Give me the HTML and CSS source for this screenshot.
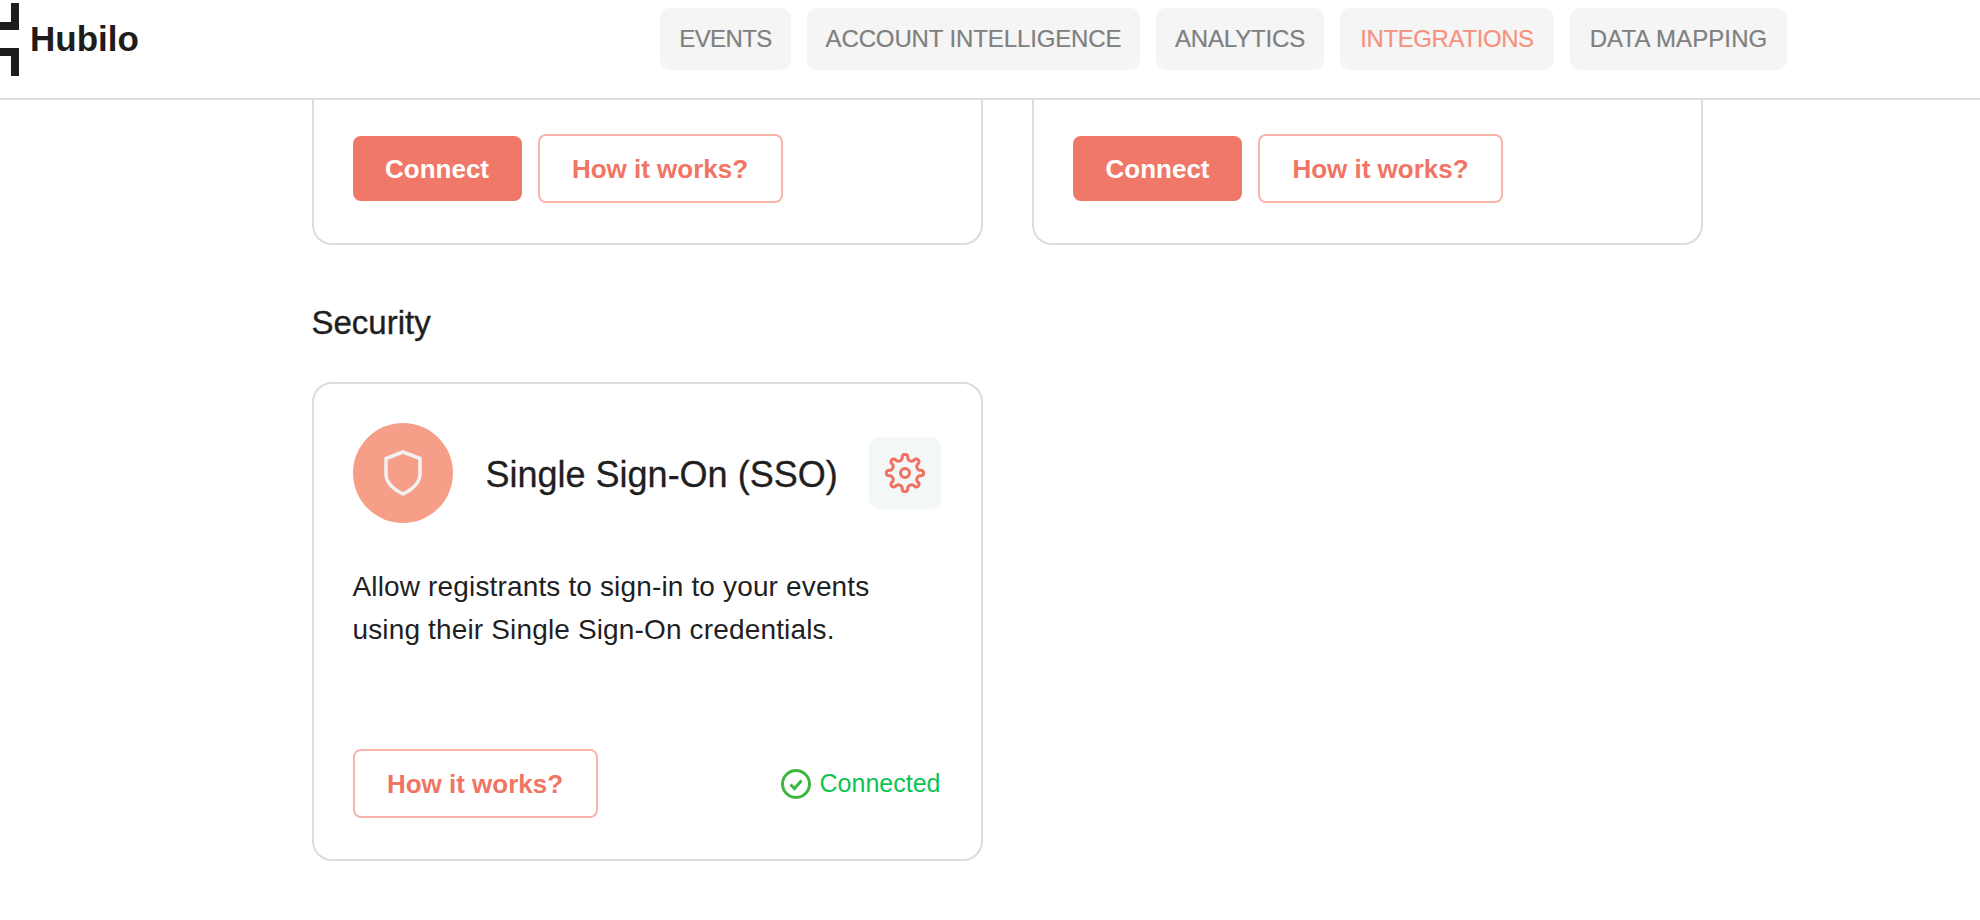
FILE: index.html
```html
<!DOCTYPE html>
<html lang="en">
<head>
<meta charset="utf-8">
<title>Hubilo Integrations</title>
<link rel="stylesheet" href="styles.css">
</head>
<body>
<header class="topbar">
  <a class="brand" href="#">
    <svg class="brand-mark" viewBox="0 0 19 76" aria-hidden="true"><path d="M11 3h8v27H0v-8h11zM0 48h19v28h-8V56H0z"/></svg>
    <span class="brand-name">Hubilo</span>
  </a>
  <nav class="tabs">
    <a class="tab tab-events" href="#">EVENTS</a>
    <a class="tab tab-account" href="#">ACCOUNT INTELLIGENCE</a>
    <a class="tab tab-analytics" href="#">ANALYTICS</a>
    <a class="tab tab-integrations" href="#">INTEGRATIONS</a>
    <a class="tab tab-mapping" href="#">DATA MAPPING</a>
  </nav>
</header>
<main class="content">
  <section class="card-grid">
    <article class="card card-clipped">
      <div class="actions">
        <button class="btn btn-primary">Connect</button>
        <button class="btn btn-outline">How it works?</button>
      </div>
    </article>
    <article class="card card-clipped">
      <div class="actions">
        <button class="btn btn-primary">Connect</button>
        <button class="btn btn-outline">How it works?</button>
      </div>
    </article>
  </section>
  <h2 class="section-title">Security</h2>
  <section class="card-grid">
    <article class="card card-full">
      <div class="card-head">
        <div class="avatar">
          <svg class="shield" viewBox="0 0 38 46" aria-hidden="true"><path d="M19 2 36 8.5V24C36 33 28 39.5 19 44 10 39.5 2 33 2 24V8.5Z"/></svg>
        </div>
        <h3 class="card-title">Single Sign-On (SSO)</h3>
        <button class="gear-btn" aria-label="Settings">
          <svg class="gear" viewBox="0 0 40 40" aria-hidden="true">
            <path d="M17.36 5.03A2.8 2.8 0 1 1 22.64 5.03A4 4 0 0 0 28.72 7.55A2.8 2.8 0 1 1 32.45 11.28A4 4 0 0 0 34.97 17.36A2.8 2.8 0 1 1 34.97 22.64A4 4 0 0 0 32.45 28.72A2.8 2.8 0 1 1 28.72 32.45A4 4 0 0 0 22.64 34.97A2.8 2.8 0 1 1 17.36 34.97A4 4 0 0 0 11.28 32.45A2.8 2.8 0 1 1 7.55 28.72A4 4 0 0 0 5.03 22.64A2.8 2.8 0 1 1 5.03 17.36A4 4 0 0 0 7.55 11.28A2.8 2.8 0 1 1 11.28 7.55A4 4 0 0 0 17.36 5.03Z"/>
            <circle cx="20" cy="20" r="4.5"/>
          </svg>
        </button>
      </div>
      <p class="card-text">Allow registrants to sign-in to your events using their Single Sign-On credentials.</p>
      <div class="card-foot">
        <button class="btn btn-outline">How it works?</button>
        <span class="status">
          <svg class="status-icon" viewBox="0 0 30 30" aria-hidden="true"><circle cx="15" cy="15" r="13.5"/><path d="M9.5 15.5 13.5 19.5 20.5 11.5"/></svg>
          Connected
        </span>
      </div>
    </article>
  </section>
</main>
</body>
</html>
```

FILE: styles.css
```css
* { box-sizing: border-box; }
html, body { margin: 0; height: 100%; background: #fff; overflow: hidden; }
body { font-family: "Liberation Sans", Arial, sans-serif; color: #1f1f1f; }
a { text-decoration: none; color: inherit; }

.topbar {
  display: flex;
  justify-content: space-between;
  height: 100px;
  padding-right: 193px;
  border-bottom: 2px solid #dcdcdc;
}
.brand { display: flex; align-items: flex-start; gap: 11px; }
.brand-mark { width: 19px; height: 76px; fill: #1f1c1c; }
.brand-name { font-size: 35px; font-weight: 700; line-height: 40px; margin-top: 19px; color: #1f1c1c; }

.tabs { display: flex; gap: 16px; margin-top: 8px; height: 62px; }
.tab {
  display: flex;
  align-items: center;
  justify-content: center;
  border-radius: 10px;
  background: #f5f5f5;
  font-size: 24px;
  color: #7f7f7f;
  -webkit-text-stroke: 0.2px #7f7f7f;
}
.tab-events { width: 131px; letter-spacing: -0.6px; }
.tab-account { width: 333px; letter-spacing: -0.12px; }
.tab-analytics { width: 168px; letter-spacing: -0.15px; }
.tab-integrations { width: 214px; letter-spacing: -0.4px; color: #f5927e; -webkit-text-stroke: 0.2px #f5927e; }
.tab-mapping { width: 217px; letter-spacing: 0.1px; }

.content { padding-left: 311.5px; }
.card-grid { display: grid; grid-template-columns: 671px 671px; gap: 49.5px; }
.card {
  border: 2px solid #dcdcdc;
  border-radius: 20px;
  padding: 39px 40px 40px 39px;
}
.card-clipped {
  border-top: 0;
  border-radius: 0 0 20px 20px;
  padding: 34px 39px 39px;
  height: 145px;
}
.card-full { display: flex; flex-direction: column; height: 479px; }

.actions { display: flex; align-items: center; gap: 16px; }
.btn {
  font-family: inherit;
  font-size: 26px;
  font-weight: 700;
  border-radius: 8px;
  cursor: pointer;
  padding: 2px 0 0;
}
.btn-primary { width: 169px; height: 65px; border: 0; background: #f07868; color: #fff; }
.btn-outline { width: 245px; height: 69px; border: 2px solid #fab5aa; background: #fff; color: #f17565; }

.section-title { margin: 58px 0 39px; font-size: 33px; line-height: 40px; font-weight: 400; -webkit-text-stroke: 0.4px #1f1f1f; }

.card-head { display: flex; align-items: center; }
.avatar {
  display: flex;
  align-items: center;
  justify-content: center;
  width: 100px;
  height: 100px;
  border-radius: 50%;
  background: #f69e88;
}
.shield { width: 38px; height: 46px; fill: none; stroke: #f2f2f2; stroke-width: 3.5; stroke-linejoin: round; }
.card-title { margin: 4px 0 0 33px; font-size: 36px; font-weight: 400; -webkit-text-stroke: 0.3px #1f1f1f; }
.gear-btn {
  display: flex;
  align-items: center;
  justify-content: center;
  width: 72px;
  height: 72px;
  margin-left: auto;
  padding: 0;
  border: 0;
  border-radius: 10px;
  background: #f4f7f8;
}
.gear { width: 40px; height: 40px; fill: none; stroke: #f1705f; stroke-width: 3; }

.card-text { max-width: 560px; margin: 42px 0 0; font-size: 28px; line-height: 43px; letter-spacing: 0.15px; }

.card-foot { display: flex; align-items: center; justify-content: space-between; margin-top: auto; margin-bottom: 1px; }
.status { display: flex; align-items: center; gap: 9px; font-size: 25px; color: #0cc450; }
.status-icon { width: 30px; height: 30px; fill: none; stroke: #3cb83e; stroke-width: 3; }
```
